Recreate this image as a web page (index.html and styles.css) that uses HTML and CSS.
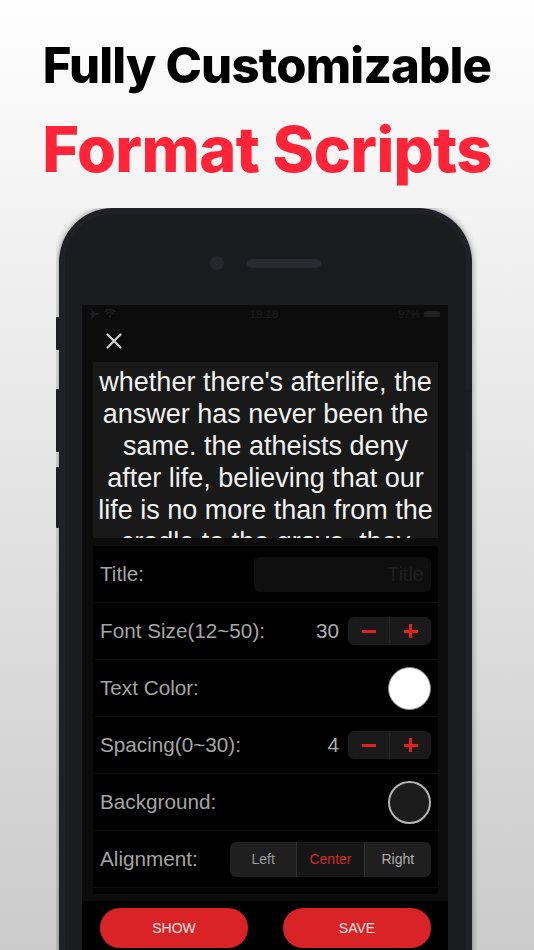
FILE: index.html
```html
<!DOCTYPE html>
<html>
<head>
<meta charset="utf-8">
<link rel="stylesheet" href="styles.css">
</head>
<body>
<div class="page">
  <h1 class="title">Fully Customizable</h1>
  <h2 class="subtitle">Format Scripts</h2>
  <div class="device-frame">
    <div class="phone">
      <span class="side-btn mute"></span>
      <span class="side-btn vol-up"></span>
      <span class="side-btn vol-down"></span>
      <span class="side-btn power"></span>
      <div class="bezel-top">
        <span class="camera"></span>
        <span class="speaker"></span>
      </div>
      <div class="screen">
        <div class="statusbar">
          <div class="sb-left">
            <svg width="11" height="10" viewBox="0 0 11 10"><path d="M0 5 L4 4 L2.5 0.5 L4 0.5 L7 4 L10.5 4 Q11 5 10.5 6 L7 6 L4 9.5 L2.5 9.5 L4 6 L0 5 Z" fill="#1f1f1f"/></svg>
            <svg width="12" height="9" viewBox="0 0 12 9"><path d="M0.5 3 A8 8 0 0 1 11.5 3" stroke="#1f1f1f" stroke-width="1.4" fill="none"/><path d="M2.5 5 A5 5 0 0 1 9.5 5" stroke="#1f1f1f" stroke-width="1.4" fill="none"/><circle cx="6" cy="7.6" r="1.3" fill="#1f1f1f"/></svg>
          </div>
          <div class="sb-time">19:18</div>
          <div class="sb-right">
            <span>97%</span>
            <span class="battery"></span>
          </div>
        </div>
        <div class="toolbar">
          <svg class="close" width="16" height="16" viewBox="0 0 16 16"><path d="M1.5 1.5 L14.5 14.5 M14.5 1.5 L1.5 14.5" stroke="#cfcfcf" stroke-width="2.2" stroke-linecap="round"/></svg>
        </div>
        <div class="preview">
          <p>whether there's afterlife, the answer has never been the same. the atheists deny after life, believing that our life is no more than from the cradle to the grave. they</p>
        </div>
        <div class="settings">
          <div class="row">
            <span class="label">Title:</span>
            <div class="title-input">Title</div>
          </div>
          <div class="row">
            <span class="label">Font Size(12~50):</span>
            <div class="control">
              <span class="value">30</span>
              <div class="stepper">
                <span class="step minus"></span>
                <span class="step plus"></span>
              </div>
            </div>
          </div>
          <div class="row">
            <span class="label">Text Color:</span>
            <span class="swatch white"></span>
          </div>
          <div class="row">
            <span class="label">Spacing(0~30):</span>
            <div class="control">
              <span class="value">4</span>
              <div class="stepper">
                <span class="step minus"></span>
                <span class="step plus"></span>
              </div>
            </div>
          </div>
          <div class="row">
            <span class="label">Background:</span>
            <span class="swatch dark"></span>
          </div>
          <div class="row">
            <span class="label">Alignment:</span>
            <div class="segmented">
              <span class="seg">Left</span>
              <span class="seg active">Center</span>
              <span class="seg">Right</span>
            </div>
          </div>
        </div>
        <div class="actions">
          <span class="action-btn">SHOW</span>
          <span class="action-btn">SAVE</span>
        </div>
      </div>
    </div>
  </div>
</div>
</body>
</html>
```

FILE: styles.css
```css
body {
  margin: 0;
}

.page {
  width: 534px;
  height: 950px;
  overflow: hidden;
  background: linear-gradient(#fefefe, #cbcbcb);
  font-family: "Liberation Sans", Arial, sans-serif;
}

.title {
  margin: 0;
  padding-top: 36px;
  font-family: Inter, sans-serif;
  font-weight: 800;
  font-size: 49px;
  line-height: 60px;
  letter-spacing: -0.8px;
  text-align: center;
  color: #000;
}

.subtitle {
  margin: 13px 0 0;
  font-family: Inter, sans-serif;
  font-weight: 800;
  font-size: 63px;
  line-height: 80px;
  letter-spacing: -0.6px;
  text-align: center;
  color: #ff2437;
}

.device-frame {
  margin: 19px 0 0 56px;
  width: 422px;
  height: 742px;
  overflow: hidden;
}

.phone {
  position: relative;
  margin-left: 3px;
  width: 401px;
  height: 800px;
  border: 6px solid #202126;
  border-bottom: 0;
  border-radius: 54px 54px 0 0;
  background: #1b1c20;
  box-shadow: 0 0 6px rgba(0, 0, 0, 0.45);
}

.side-btn {
  position: absolute;
  width: 3px;
  background: #1d1e22;
  border-radius: 1px;
}

.mute { left: -9px; top: 103px; height: 33px; }
.vol-up { left: -9px; top: 175px; height: 63px; }
.vol-down { left: -9px; top: 253px; height: 61px; }
.power { left: 401px; top: 175px; height: 63px; width: 4px; }

.bezel-top {
  height: 91px;
  box-sizing: border-box;
  padding-top: 42px;
  display: flex;
  justify-content: center;
  align-items: flex-start;
  gap: 23px;
}

.camera {
  width: 14px;
  height: 14px;
  border-radius: 50%;
  background: #27282d;
}

.speaker {
  margin-top: 3px;
  width: 74px;
  height: 9px;
  border-radius: 5px;
  background: #2a2b30;
}

.screen {
  margin-left: 17px;
  width: 366px;
  height: 720px;
  background: #0c0c0c;
}

.statusbar {
  height: 17px;
  display: grid;
  grid-template-columns: 1fr auto 1fr;
  align-items: center;
  padding: 0 8px 0 6px;
  font-size: 11px;
  color: #1f1f1f;
}

.sb-left {
  display: flex;
  align-items: center;
  gap: 5px;
}

.sb-time {
  font-size: 11.5px;
}

.sb-right {
  display: flex;
  justify-content: flex-end;
  align-items: center;
  gap: 4px;
}

.battery {
  width: 16px;
  height: 6px;
  border-radius: 1.5px;
  background: #1f1f1f;
}

.toolbar {
  height: 40px;
  box-sizing: border-box;
  padding: 11px 0 0 24px;
}

.close {
  display: block;
}

.preview {
  margin: 0 10px 0 11px;
  height: 176px;
  box-sizing: border-box;
  padding: 4px 4px 0;
  background: #191919;
  overflow: hidden;
}

.preview p {
  margin: 0;
  font-size: 27px;
  line-height: 32px;
  text-align: center;
  color: #f1f1f1;
}

.settings {
  margin: 8px 10px 7px 11px;
  padding-bottom: 6px;
  background: #000;
}

.row {
  height: 56px;
  border-bottom: 1px solid #0e0e0e;
  padding: 0 7px;
  display: flex;
  align-items: center;
  justify-content: space-between;
}

.label {
  font-size: 20.7px;
  color: #a5a5a5;
}

.title-input {
  width: 177px;
  height: 35px;
  box-sizing: border-box;
  padding-right: 7px;
  border-radius: 6px;
  background: #0f0f0f;
  color: #1f1f1f;
  font-size: 20px;
  line-height: 35px;
  text-align: right;
}

.control {
  display: flex;
  align-items: center;
  gap: 9px;
}

.value {
  font-size: 20.7px;
  color: #aeaeae;
}

.stepper {
  width: 83px;
  height: 28px;
  border-radius: 6px;
  background: #1a1a1a;
  display: flex;
}

.step {
  position: relative;
  flex: 1;
}

.step.minus {
  border-right: 1px solid #262626;
}

.step::before,
.plus::after {
  content: "";
  position: absolute;
  left: 50%;
  top: 50%;
  width: 14px;
  height: 3px;
  margin: -1.5px 0 0 -7px;
  background: #e3211f;
}

.plus::after {
  width: 3px;
  height: 14px;
  margin: -7px 0 0 -1.5px;
}

.swatch {
  width: 43px;
  height: 43px;
  box-sizing: border-box;
  border-radius: 50%;
}

.swatch.white {
  background: #fff;
  border: 1.5px solid #8c8c8c;
}

.swatch.dark {
  background: #1b1b1b;
  border: 2px solid #b5b5b5;
}

.segmented {
  width: 201px;
  height: 35px;
  border-radius: 6px;
  background: #1f1f1f;
  display: flex;
  overflow: hidden;
}

.seg {
  flex: 1;
  display: flex;
  align-items: center;
  justify-content: center;
  font-size: 14px;
  color: #9a9a9a;
}

.seg + .seg {
  border-left: 1px solid #333;
}

.seg.active {
  background: #161616;
  color: #d8262a;
}

.seg:last-child {
  color: #adadad;
}

.actions {
  height: 60px;
  padding: 7px 17px 0 18px;
  background: #000;
  display: flex;
  justify-content: space-between;
  align-items: flex-start;
}

.action-btn {
  width: 148px;
  height: 40px;
  border-radius: 20px;
  background: #d92327;
  color: #f3e6e6;
  font-size: 14px;
  line-height: 40px;
  text-align: center;
}
```
